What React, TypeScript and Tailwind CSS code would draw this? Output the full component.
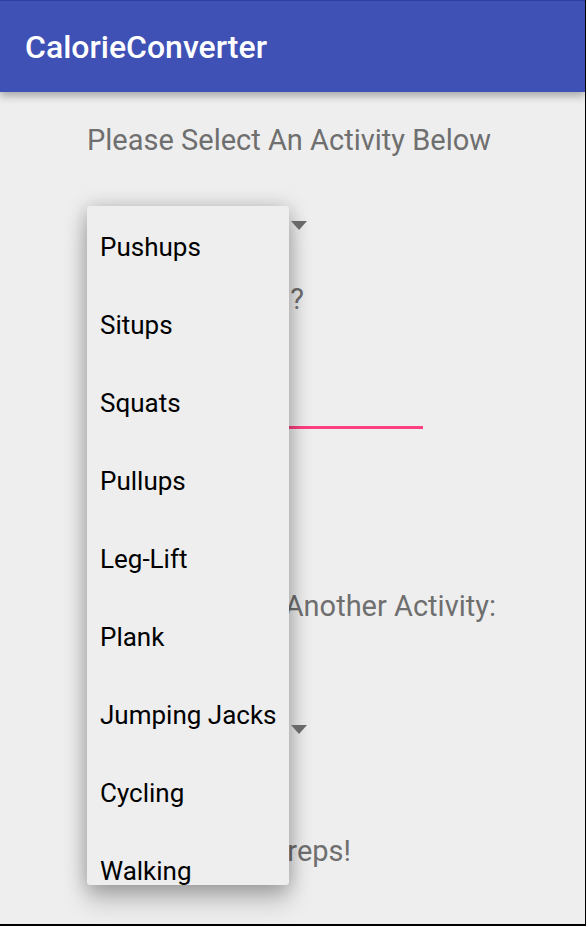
const activities = [
  "Pushups",
  "Situps",
  "Squats",
  "Pullups",
  "Leg-Lift",
  "Plank",
  "Jumping Jacks",
  "Cycling",
  "Walking",
];

function Spinner({ label }: { label: string }) {
  return (
    <div className="relative h-12 w-[226px]">
      <select
        aria-label={label}
        className="h-full w-full appearance-none bg-transparent text-[26px] text-transparent outline-none"
      >
        {activities.map((name) => (
          <option key={name}>{name}</option>
        ))}
      </select>
      <svg
        className="pointer-events-none absolute top-5 right-1.5 z-20 h-[9px] w-4"
        viewBox="0 0 16 9"
        aria-hidden="true"
      >
        <path d="M0 0h16l-8 9z" fill="#696969" />
      </svg>
    </div>
  );
}

function ActivityMenu() {
  return (
    <ul
      role="listbox"
      aria-label="Activities"
      className="absolute top-[114px] left-0 z-10 h-[679px] w-[202px] overflow-hidden rounded-[3px] bg-[#eeeeee] pt-0.5 shadow-[0_16px_24px_rgba(0,0,0,0.2),0_2px_20px_rgba(0,0,0,0.26)]"
    >
      {activities.map((name) => (
        <li key={name} role="option" aria-selected={false}>
          <button
            type="button"
            className="flex h-[78px] w-full items-center px-[13px] text-left text-[26px] whitespace-nowrap text-black"
          >
            {name}
          </button>
        </li>
      ))}
    </ul>
  );
}

export default function App() {
  return (
    <div className="flex min-h-screen flex-col border-r border-b-2 border-black bg-[#eeeeee] font-['Roboto',sans-serif] text-[#6f6f6f]">
      <header className="flex h-[92px] items-center border-t border-[#303f9f] bg-[#3f51b5] px-[25px] shadow-[0_4px_8px_rgba(0,0,0,0.3)]">
        <h1 className="text-[32px] font-medium text-white">CalorieConverter</h1>
      </header>
      <main className="relative mr-[89px] ml-[87px] flex flex-col pt-7 text-[29px] leading-10">
        <p className="whitespace-nowrap">Please Select An Activity Below</p>
        <div className="mt-[41px]">
          <Spinner label="Activity" />
        </div>
        <label htmlFor="amount" className="mt-[30px] w-[217px] text-right">
          ?
        </label>
        <input
          id="amount"
          className="mt-[50px] h-[60px] w-[336px] border-b-[3px] border-[#ff4081] bg-transparent outline-none"
        />
        <p className="mt-[157px] text-right whitespace-nowrap">Another Activity:</p>
        <div className="mt-[79px]">
          <Spinner label="Another activity" />
        </div>
        <p className="mt-[78px] w-[264px] text-right">reps!</p>
        <ActivityMenu />
      </main>
    </div>
  );
}
